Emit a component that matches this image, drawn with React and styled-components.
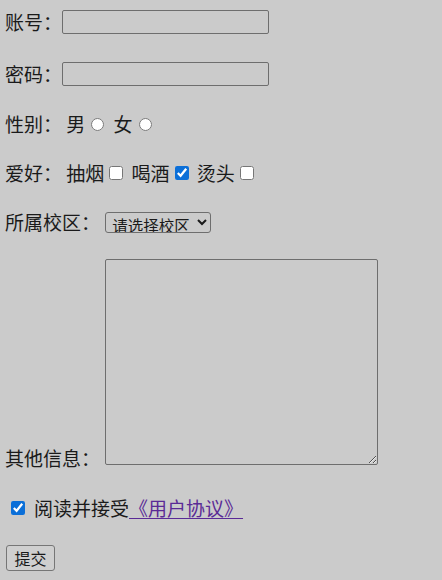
import React from "react";
import styled, { createGlobalStyle } from "styled-components";

const Global = createGlobalStyle`
  html, body { margin: 0; padding: 0; background: #cbcbcb; }
  body {
    font-family: "Noto Sans CJK SC", "Noto Sans", sans-serif;
    font-size: 19px;
    color: #1a1a1a;
  }
`;

const Form = styled.form`
  display: flex;
  flex-direction: column;
  align-items: flex-start;
  padding: 0 0 0 5px;
`;

const Row = styled.div`
  display: flex;
  align-items: ${(p) => (p.$bottom ? "flex-end" : "center")};
  min-height: 24px;
  margin-top: ${(p) => p.$top}px;
  white-space: pre;
  line-height: 24px;
`;

const Label = styled.span`
  line-height: ${(p) => (p.$tight ? "20px" : "24px")};
  margin-bottom: ${(p) => (p.$tight ? "-3px" : "0")};
`;

const TextInput = styled.input`
  box-sizing: border-box;
  width: 207px;
  height: 24px;
  margin: 0;
  border: 1px solid #6e6e6e;
  border-radius: 2px;
  background: transparent;
  font: inherit;
  font-size: 14px;
  padding: 1px 3px;
`;

const Choice = styled.input`
  width: ${(p) => (p.type === "radio" ? 13 : 14)}px;
  height: ${(p) => (p.type === "radio" ? 13 : 14)}px;
  margin: 0 ${(p) => (p.type === "radio" ? 5 : 4)}px 0 ${(p) => (p.type === "radio" ? 6 : 5)}px;
  accent-color: #0b6fd8;
`;

const Select = styled.select`
  box-sizing: border-box;
  width: 106px;
  height: 21px;
  margin: 0 0 0 1px;
  padding: 0 0 0 2px;
  border: 1px solid #6e6e6e;
  border-radius: 3px;
  background: transparent;
  font-family: "Noto Sans CJK SC", sans-serif;
  font-size: 15.5px;
  color: #1a1a1a;
`;

const TextArea = styled.textarea`
  box-sizing: border-box;
  width: 273px;
  height: 206px;
  margin: 0 0 0 1px;
  border: 1px solid #6e6e6e;
  border-radius: 2px;
  background: transparent;
`;

const Agree = styled.input`
  width: 14px;
  height: 14px;
  margin: 0 9px 0 6px;
  accent-color: #0b6fd8;
`;

const Link = styled.a`
  color: #5a2a96;
  text-decoration: underline;
  text-underline-offset: 2px;
  text-decoration-thickness: 1px;
`;

const Submit = styled.button`
  box-sizing: border-box;
  width: 49px;
  height: 26px;
  margin: 0 0 0 1px;
  padding: 0;
  border: 1px solid #767676;
  border-radius: 3px;
  background: #cfcfcf;
  font-family: "Noto Sans CJK SC", sans-serif;
  font-size: 16px;
  color: #1a1a1a;
`;

export default function App() {
  return (
    <>
      <Global />
      <Form onSubmit={(e) => e.preventDefault()}>
        <Row $top={10}>
          <Label>账号：</Label>
          <TextInput type="text" />
        </Row>
        <Row $top={28}>
          <Label>密码：</Label>
          <TextInput type="password" />
        </Row>
        <Row $top={26}>
          <Label>性别： 男</Label>
          <Choice type="radio" name="sex" />
          <Label> 女</Label>
          <Choice type="radio" name="sex" />
        </Row>
        <Row $top={25}>
          <Label>爱好： 抽烟</Label>
          <Choice type="checkbox" />
          <Label> 喝酒</Label>
          <Choice type="checkbox" defaultChecked />
          <Label> 烫头</Label>
          <Choice type="checkbox" />
        </Row>
        <Row $top={25}>
          <Label>所属校区： </Label>
          <Select defaultValue="">
            <option value="">请选择校区</option>
            <option value="1">北京校区</option>
            <option value="2">上海校区</option>
          </Select>
        </Row>
        <Row $top={25} $bottom>
          <Label $tight>其他信息： </Label>
          <TextArea />
        </Row>
        <Row $top={31}>
          <Agree type="checkbox" defaultChecked />
          <Label>阅读并接受</Label>
          <Link href="#">《用户协议》</Link>
        </Row>
        <Row $top={25}>
          <Submit type="submit">提交</Submit>
        </Row>
      </Form>
    </>
  );
}
